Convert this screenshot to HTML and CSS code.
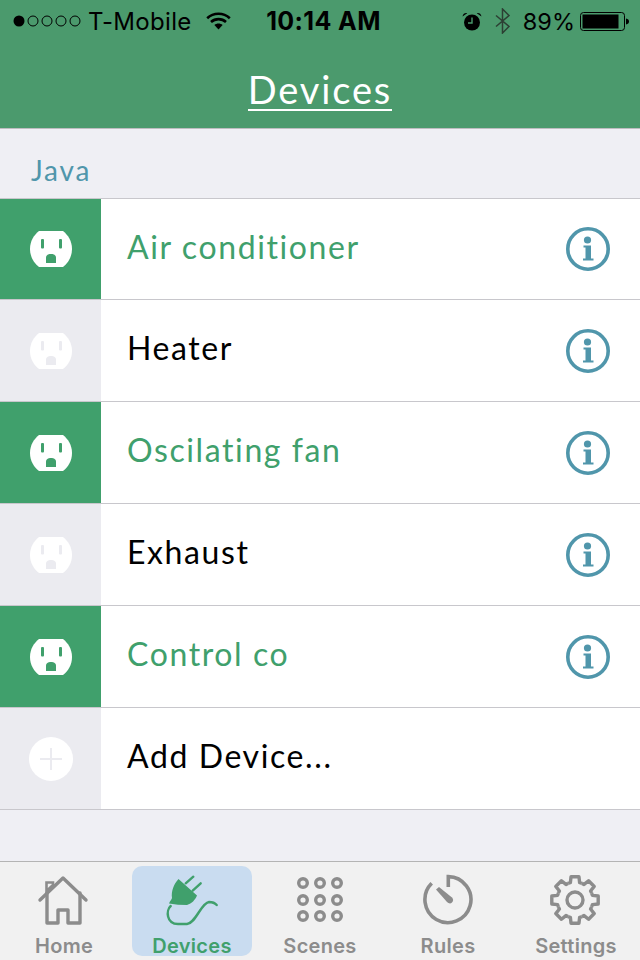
FILE: index.html
```html
<!DOCTYPE html>
<html>
<head>
	<title>Devices</title>
	<link rel="stylesheet" href="styles.css">
</head>
<body>
	<svg class="defs" width="0" height="0">
		<defs>
			<g id="outlet">
				<path d="M9 0H33C38 4 42 10 42 18C42 26 38 32 33 36H9C4 32 0 26 0 18C0 10 4 4 9 0Z" fill="#fff"/>
				<rect x="11" y="8" width="3" height="9.5" rx="1" fill="currentColor"/>
				<rect x="29" y="8" width="3" height="9.5" rx="1" fill="currentColor"/>
				<path d="M16 32V27C16 24 18 23 21 23C24 23 26 24 26 27V32Z" fill="currentColor"/>
			</g>
			<g id="info">
				<circle cx="22" cy="22" r="20.2" fill="none" stroke="#5096ab" stroke-width="3.6"/>
				<circle cx="21.5" cy="13" r="3.6" fill="#5096ab"/>
				<path d="M17.5 18.5H25V31.5H27.5V33.5H17V31.5H19.5V20.5H17.5Z" fill="#5096ab"/>
			</g>
			<path id="tooth" d="M-6.9-16.6A18 18 0 0 1-4.6-17.4L-4-23.2H4L4.6-17.4A18 18 0 0 1 6.9-16.6"/>
		</defs>
	</svg>

	<div class="top-bar">
		<div class="status">
			<div class="status-left">
				<svg class="signal" width="68" height="14" viewBox="0 0 68 14">
					<circle cx="6" cy="7" r="5.5" fill="#000"/>
					<g fill="none" stroke="#000" stroke-width="1">
						<circle cx="20" cy="7" r="5"/>
						<circle cx="34" cy="7" r="5"/>
						<circle cx="48" cy="7" r="5"/>
						<circle cx="62" cy="7" r="5"/>
					</g>
				</svg>
				<span class="carrier">T-Mobile</span>
				<svg class="wifi" width="25" height="18" viewBox="0 0 25 18">
					<g fill="none" stroke="#000" stroke-width="2.6">
						<path d="M1.2 6.2C7.5 .2 17.5 .2 23.8 6.2"/>
						<path d="M5 10C9.2 6.2 15.8 6.2 20 10"/>
					</g>
					<path d="M8.4 13C10.6 11 14.4 11 16.6 13L12.5 17.6Z" fill="#000"/>
				</svg>
			</div>
			<div class="clock">10:14 AM</div>
			<div class="status-right">
				<svg width="20" height="19" viewBox="0 0 20 19">
					<circle cx="10" cy="10.5" r="8" fill="#000"/>
					<path d="M10 5.5V11H6" fill="none" stroke="#4b9a6d" stroke-width="1.4"/>
					<path d="M.5 4.5C1 1.8 3 .8 5.2 1.2ZM19.5 4.5C19 1.8 17 .8 14.8 1.2Z" fill="#000"/>
				</svg>
				<svg class="bluetooth" width="15" height="26" viewBox="0 0 15 26">
					<path d="M1 7.5L14 18.5L7.5 25V1L14 7.5L1 18.5" fill="none" stroke="#2c3f33" stroke-width="1.5"/>
				</svg>
				<span class="percent">89%</span>
				<svg width="49" height="19" viewBox="0 0 49 19">
					<rect x=".5" y=".5" width="44" height="18" rx="3" fill="none" stroke="#000"/>
					<rect x="2.5" y="2.5" width="36" height="14" fill="#000"/>
					<path d="M46 6.5C48 6.8 49 8 49 9.5C49 11 48 12.2 46 12.5Z" fill="#000"/>
				</svg>
			</div>
		</div>
		<h1 class="title"><span>Devices</span></h1>
	</div>

	<div class="section-label">Java</div>

	<div class="device-list">
		<div class="device first on">
			<div class="device-icon"><svg width="42" height="36"><use href="#outlet"/></svg></div>
			<div class="device-name">Air conditioner</div>
			<svg class="info" width="44" height="44"><use href="#info"/></svg>
		</div>
		<div class="device">
			<div class="device-icon"><svg width="42" height="36"><use href="#outlet"/></svg></div>
			<div class="device-name">Heater</div>
			<svg class="info" width="44" height="44"><use href="#info"/></svg>
		</div>
		<div class="device on">
			<div class="device-icon"><svg width="42" height="36"><use href="#outlet"/></svg></div>
			<div class="device-name">Oscilating fan</div>
			<svg class="info" width="44" height="44"><use href="#info"/></svg>
		</div>
		<div class="device">
			<div class="device-icon"><svg width="42" height="36"><use href="#outlet"/></svg></div>
			<div class="device-name">Exhaust</div>
			<svg class="info" width="44" height="44"><use href="#info"/></svg>
		</div>
		<div class="device on">
			<div class="device-icon"><svg width="42" height="36"><use href="#outlet"/></svg></div>
			<div class="device-name">Control co</div>
			<svg class="info" width="44" height="44"><use href="#info"/></svg>
		</div>
		<div class="device">
			<div class="device-icon">
				<svg width="44" height="44" viewBox="0 0 44 44">
					<circle cx="22" cy="22" r="22" fill="#fff"/>
					<path d="M22 11V33M11 22H33" stroke="#ebebf0" stroke-width="2"/>
				</svg>
			</div>
			<div class="device-name">Add Device...</div>
		</div>
	</div>

	<div class="spacer"></div>

	<div class="tab-bar">
		<div class="tab">
			<svg width="54" height="54" viewBox="0 0 54 54">
				<g fill="none" stroke="#8c8c8c" stroke-width="3.4" stroke-linejoin="round" stroke-linecap="round">
					<path d="M3 26L26 4L49 26"/>
					<path d="M10 19V49H21V36H31V49H43V19"/>
				</g>
				<path d="M9.5 17V8.5H16V11Z" fill="none" stroke="#8c8c8c" stroke-width="2.6"/>
			</svg>
			<span class="tab-label">Home</span>
		</div>
		<div class="tab active">
			<svg width="54" height="54" viewBox="0 0 54 54">
				<path d="M13.5 5L32 21.5C30 26 27 29.5 22 31C16 31 10 30.5 4 29.5C5 27 6.5 26 7 24C6 17 9 10 13.5 5Z" fill="#40a06c"/>
				<g fill="none" stroke="#40a06c" stroke-width="2.4" stroke-linecap="round">
					<path d="M20.7 9.3L28.3 2.7"/>
					<path d="M27.7 16.7L35.7 9.3"/>
					<path d="M5.7 32C1 36 1 50 13 50C17 50 20 50 22 50C31 49 36 29 44 28C47 28 50 29 51.7 31"/>
				</g>
			</svg>
			<span class="tab-label">Devices</span>
		</div>
		<div class="tab">
			<svg width="54" height="54" viewBox="0 0 54 54">
				<g fill="none" stroke="#8c8c8c" stroke-width="3.4">
					<circle cx="10" cy="9" r="4.3"/>
					<circle cx="27" cy="9" r="4.3"/>
					<circle cx="44" cy="9" r="4.3"/>
					<circle cx="10" cy="26" r="4.3"/>
					<circle cx="27" cy="26" r="4.3"/>
					<circle cx="44" cy="26" r="4.3"/>
					<circle cx="10" cy="42" r="4.3"/>
					<circle cx="27" cy="42" r="4.3"/>
					<circle cx="44" cy="42" r="4.3"/>
				</g>
			</svg>
			<span class="tab-label">Scenes</span>
		</div>
		<div class="tab">
			<svg width="54" height="54" viewBox="0 0 54 54">
				<path d="M27.3 13V2.6A23 23 0 1 1 10.7 9.3" fill="none" stroke="#8c8c8c" stroke-width="3.6"/>
				<path d="M15 15.5L18 13L31 23.5C32.5 25 32.5 27 31 28.5C29.5 30 27.5 29.5 26 28Z" fill="#8c8c8c"/>
			</svg>
			<span class="tab-label">Rules</span>
		</div>
		<div class="tab">
			<svg width="54" height="54" viewBox="-26 -26 54 54">
				<g fill="none" stroke="#8c8c8c" stroke-width="3.4" stroke-linejoin="round">
					<use href="#tooth"/>
					<use href="#tooth" transform="rotate(45)"/>
					<use href="#tooth" transform="rotate(90)"/>
					<use href="#tooth" transform="rotate(135)"/>
					<use href="#tooth" transform="rotate(180)"/>
					<use href="#tooth" transform="rotate(225)"/>
					<use href="#tooth" transform="rotate(270)"/>
					<use href="#tooth" transform="rotate(315)"/>
					<circle r="8"/>
				</g>
			</svg>
			<span class="tab-label">Settings</span>
		</div>
	</div>
</body>
</html>
```

FILE: styles.css
```css
html, body {
	margin: 0;
	padding: 0;
}
body {
	width: 640px;
	height: 960px;
	display: flex;
	flex-direction: column;
	background-color: #efeff4;
	font-family: "Lato", sans-serif;
	overflow: hidden;
}
.defs {
	position: absolute;
}
.top-bar {
	height: 128px;
	background-color: #4b9a6d;
	border-bottom: 1px solid #bdbdc0;
}
.status {
	height: 42px;
	display: grid;
	grid-template-columns: 1fr auto 1fr;
	align-items: center;
	font-family: "Inter", sans-serif;
	font-size: 24px;
	color: #000;
}
.status-left {
	display: flex;
	align-items: center;
	padding-left: 13px;
}
.carrier {
	margin-left: 7px;
	letter-spacing: .3px;
}
.wifi {
	margin-left: 14px;
}
.clock {
	padding-left: 7px;
	font-size: 25px;
	font-weight: 700;
	letter-spacing: .4px;
}
.status-right {
	display: flex;
	align-items: center;
	justify-content: flex-end;
	padding-right: 11px;
}
.bluetooth {
	margin-left: 13px;
}
.percent {
	margin: 0 5px 0 13px;
	font-size: 23.5px;
}
.title {
	margin: 0;
	padding-top: 25px;
	text-align: center;
	font-size: 38px;
	font-weight: 400;
	line-height: 44px;
	color: #fff;
}
.title span {
	display: inline-block;
	height: 42px;
	letter-spacing: 1.85px;
	border-bottom: 2px solid #fff;
}
.section-label {
	height: 70px;
	box-sizing: border-box;
	padding: 24px 0 0 31px;
	font-size: 28px;
	line-height: 34px;
	letter-spacing: 1.8px;
	color: #5096ab;
	border-bottom: 1px solid #c8c7cc;
}
.device {
	height: 101px;
	display: flex;
	align-items: center;
	background-color: #fff;
	border-bottom: 1px solid #c8c7cc;
}
.device.first {
	height: 100px;
}
.device-icon {
	width: 101px;
	align-self: stretch;
	display: flex;
	align-items: center;
	justify-content: center;
	background-color: #ebebf0;
	color: #ebebf0;
}
.device.on .device-icon {
	background-color: #40a06c;
	color: #40a06c;
}
.device-name {
	flex: 1;
	padding: 0 0 6px 26px;
	font-size: 32px;
	letter-spacing: 1.6px;
	color: #000;
}
.device.on .device-name {
	color: #40a06c;
}
.info {
	margin-right: 30px;
}
.spacer {
	flex: 1;
}
.tab-bar {
	height: 98px;
	display: flex;
	background-color: #f1f1f1;
	border-top: 1px solid #b4b4b4;
}
.tab {
	width: 120px;
	height: 90px;
	margin: 4px;
	display: flex;
	flex-direction: column;
	align-items: center;
	border-radius: 10px;
	color: #8c8c8c;
}
.tab svg {
	margin-top: 8px;
}
.tab.active {
	background-color: #c9dcf0;
	color: #40a06c;
}
.tab-label {
	font-family: "Inter", sans-serif;
	font-size: 20px;
	font-weight: 600;
	line-height: 20px;
	letter-spacing: .3px;
	margin-top: 8px;
}
```
